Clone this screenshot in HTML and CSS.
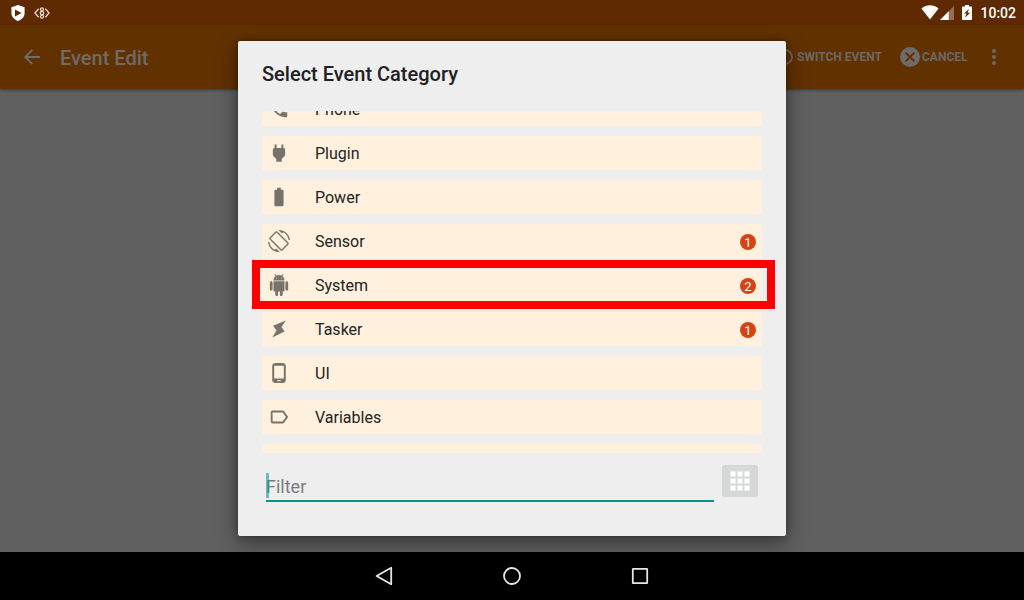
FILE: index.html
```html
<!DOCTYPE html>
<html lang="en">
<head>
<meta charset="utf-8">
<title>Event Edit</title>
<link rel="stylesheet" href="styles.css">
</head>
<body>
<div class="screen">
  <header class="status">
    <svg class="shield" width="14" height="16" viewBox="0 0 14 16"><path fill="#fff" fill-rule="evenodd" d="M7 0 13.6 2.3V8c0 4-3 6.600-6.600 8C3.400 14.600.4 12 .4 8V2.300zM4 4.500v7L10.600 8z"/></svg>
    <svg class="code" width="16" height="12" viewBox="0 0 16 12" fill="none" stroke="#ead9cc" stroke-width="1.300"><path d="M4.700 1.700.9 6l3.800 4.300M11.300 1.700 15.100 6l-3.800 4.300"/><circle cx="8" cy="2.300" r="1.500"/><circle cx="8" cy="6" r="1.700"/><circle cx="8" cy="9.700" r="1.500"/></svg>
    <span class="fill"></span>
    <svg class="wifi" width="18" height="15" viewBox="0 0 18 15"><path fill="#fff" d="M9 14.500.4 3.500C3 1.200 6 .3 9 .3s6 .9 8.600 3.200z"/></svg>
    <svg class="signal" width="14" height="14" viewBox="0 0 14 14"><path fill="#946e57" d="M14 0v14H0z"/><path fill="#fff" d="M8.700 5.300V14H0z"/></svg>
    <svg class="charge" width="10" height="15" viewBox="0 0 10 15"><path fill="#fff" d="M3 0h4v1.500h2.300q.7 0 .7.700v12.100q0 .7-.7.700H.7Q0 15 0 14.300V2.200q0-.7.700-.7H3z"/><path fill="#5f2a02" d="M7 4 2 8.600h2.500L3 12.800l5.200-5.100H5.600z"/></svg>
    <span class="clock">10:02</span>
  </header>
  <div class="appbar">
    <svg class="back" width="16" height="16" viewBox="0 0 16 16" fill="none" stroke="#6e6b68" stroke-width="1.900"><path d="M16 8H1.500M8.300.8 1.300 8l7 7.200"/></svg>
    <h1 class="page-title">Event Edit</h1>
    <span class="fill"></span>
    <svg class="switch" width="16" height="16" viewBox="0 0 16 16"><circle cx="8" cy="8" r="7" fill="none" stroke="#6b6866" stroke-width="1.800"/></svg>
    <span class="action action-switch">SWITCH EVENT</span>
    <svg class="cancel" width="20" height="20" viewBox="0 0 20 20"><circle cx="10" cy="10" r="10" fill="#6e6b69"/><path d="m5.600 5.600 8.800 8.800m0-8.800-8.800 8.800" stroke="#613100" stroke-width="2"/></svg>
    <span class="action action-cancel">CANCEL</span>
    <svg class="more" width="4" height="16" viewBox="0 0 4 16" fill="#6b6866"><circle cx="2" cy="2" r="2"/><circle cx="2" cy="8" r="2"/><circle cx="2" cy="14" r="2"/></svg>
  </div>
  <main class="content"></main>
  <nav class="navbar">
    <svg width="20" height="20" viewBox="0 0 20 20"><path d="M17.200 1.800v16.400L2.600 10z"/></svg>
    <svg width="20" height="20" viewBox="0 0 20 20"><circle cx="10" cy="10" r="8"/></svg>
    <svg width="20" height="20" viewBox="0 0 20 20"><rect x="2.800" y="2.800" width="14.400" height="14.400" rx=".5"/></svg>
  </nav>

  <section class="dialog">
    <h2 class="dialog-title">Select Event Category</h2>
    <div class="list">
      <div class="row"><svg class="icon" viewBox="0 0 24 24"><path d="M6.620 10.790c1.440 2.830 3.760 5.140 6.590 6.590l2.200-2.200c.27-.27.670-.36 1.020-.24 1.120.37 2.330.57 3.570.57.550 0 1 .45 1 1V20c0 .550-.45 1-1 1-9.390 0-17-7.610-17-17 0-.550.45-1 1-1h3.500c.550 0 1 .45 1 1 0 1.250.2 2.450.57 3.570.11.350.03.740-.25 1.020z"/></svg><span class="label">Phone</span></div>
      <div class="row"><svg class="icon" viewBox="0 0 24 24"><path d="M16.800 6.500V2.800h-2.200v3.700H9.400V2.800H7.200v3.700C6 6.500 5.300 7.400 5.300 8.500v6.300L9 18.600v2.900h6v-2.900l3.700-3.800V8.500c0-1.100-.8-2-1.900-2z"/></svg><span class="label">Plugin</span></div>
      <div class="row"><svg class="icon" viewBox="0 0 24 24"><path d="M15.700 4H14V2h-4v2H8.300C7.600 4 7 4.600 7 5.300v15.300c0 .8.600 1.400 1.300 1.400h7.300c.8 0 1.400-.6 1.400-1.300V5.300c0-.7-.6-1.300-1.300-1.300z"/></svg><span class="label">Power</span></div>
      <div class="row"><svg class="icon" viewBox="0 0 24 24"><path d="M16.480 2.520c3.270 1.550 5.610 4.720 5.970 8.480h1.500C23.440 4.840 18.290 0 12 0l-.66.030 3.810 3.810 1.330-1.320zm-6.250-.77c-.59-.59-1.540-.59-2.120 0L1.750 8.110c-.59.590-.59 1.540 0 2.120l12.020 12.020c.59.590 1.540.590 2.120 0l6.360-6.360c.59-.59.590-1.540 0-2.120L10.230 1.750zm4.600 19.440L2.810 9.170l6.360-6.360 12.020 12.020-6.360 6.360zm-7.310.29C4.250 19.940 1.910 16.760 1.550 13H.05C.56 19.160 5.710 24 12 24l.66-.03-3.810-3.810-1.330 1.320z"/></svg><span class="label">Sensor</span><span class="badge">1</span></div>
      <div class="row"><svg class="icon android" viewBox="0 0 24 24"><path d="M6 18c0 .550.45 1 1 1h1v3.500c0 .830.670 1.500 1.500 1.500s1.500-.67 1.500-1.500V19h2v3.500c0 .830.670 1.500 1.500 1.500s1.500-.67 1.500-1.500V19h1c.550 0 1-.45 1-1V8H6v10zM3.500 8C2.670 8 2 8.670 2 9.500v7c0 .830.670 1.500 1.500 1.500S5 17.330 5 16.500v-7C5 8.670 4.330 8 3.500 8zm17 0c-.83 0-1.500.67-1.500 1.500v7c0 .830.670 1.500 1.500 1.500s1.500-.67 1.500-1.500v-7c0-.83-.67-1.500-1.500-1.500zm-4.970-5.840 1.300-1.300c.2-.2.200-.51 0-.71-.2-.2-.51-.2-.71 0l-1.480 1.480C13.850 1.230 12.950 1 12 1c-.96 0-1.860.23-2.660.63L7.850.15c-.2-.2-.51-.2-.71 0-.2.200-.2.510 0 .71l1.310 1.310C6.970 3.260 6 5.010 6 7h12c0-1.990-.97-3.750-2.470-4.840zM10 5H9V4h1v1zm5 0h-1V4h1v1z"/></svg><span class="label">System</span><span class="badge">2</span></div>
      <div class="row"><svg class="icon" viewBox="0 0 24 24"><path d="M19.500 2.600 5.600 8.400 9.300 13.600 4.600 21.200 18.200 14.800 14.600 9.800z"/></svg><span class="label">Tasker</span><span class="badge">1</span></div>
      <div class="row"><svg class="icon" viewBox="0 0 24 24"><path d="M16 1H8C6.340 1 4.600 2.340 4.600 4v16c0 1.660 1.740 3 3.400 3h8c1.660 0 3.400-1.340 3.400-3V4c0-1.660-1.740-3-3.400-3zm-2 20h-4v-1h4v1zm3.250-3H6.750V4h10.500v14z"/></svg><span class="label">UI</span></div>
      <div class="row"><svg class="icon" viewBox="0 0 24 24"><path d="M17.630 5.840C17.270 5.330 16.670 5 16 5L5 5.010C3.900 5.010 3 5.900 3 7v10c0 1.100.9 1.990 2 1.990L16 19c.67 0 1.270-.33 1.630-.84L22 12l-4.370-6.160zM16 17H5V7h11l3.550 5L16 17z"/></svg><span class="label">Variables</span></div>
      <div class="row"></div>
    </div>
    <div class="footer">
      <div class="filter"><span class="caret"></span>Filter</div>
      <div class="grid-button"><svg width="20" height="20" viewBox="0 0 20 20"><path fill="#e9eaea" d="M0 0h20v20H0z"/><path fill="#fff" d="M1 1h4v4H1zM8 1h4v4H8zM15 1h4v4h-4zM1 8h4v4H1zM8 8h4v4H8zM15 8h4v4h-4zM1 15h4v4H1zM8 15h4v4H8zM15 15h4v4h-4z"/><path stroke="#d6d7d7" stroke-width="1" d="M6.500 0v20M13.500 0v20M0 6.500h20M0 13.500h20"/></svg></div>
    </div>
  </section>
  <div class="highlight"></div>
</div>
</body>
</html>
```
FILE: styles.css
```css
* { box-sizing: border-box; }
body { margin: 0; font-family: Roboto, "Noto Sans", sans-serif; }
svg { display: block; flex: none; }
h1, h2 { margin: 0; font-weight: 500; }

.screen {
  position: relative;
  width: 1024px;
  height: 600px;
  display: flex;
  flex-direction: column;
  overflow: hidden;
  background: #606060;
}
.fill { flex: 1; }

.status {
  height: 25px;
  display: flex;
  align-items: center;
  padding: 0 8px 0 11px;
  background: #5f2a02;
}
.code { margin-left: 9px; }
.wifi { margin-top: -1px; }
.signal { margin: 1px 8px 0 1px; }
.charge { margin: -1px 8px 0 0; }
.clock { color: #fff; font-size: 14px; font-weight: 500; line-height: 25px; padding-top: 1px; }

.appbar {
  height: 64px;
  display: flex;
  align-items: center;
  padding: 0 28px 0 24px;
  background: #613100;
  box-shadow: 0 1px 3px rgba(0, 0, 0, .45);
}
.page-title { margin-left: 20px; padding-top: 1px; font-size: 20px; line-height: 24px; color: #6e6b68; }
.action { font-size: 12px; font-weight: 700; line-height: 16px; color: #6b6866; white-space: nowrap; }
.action-switch { margin-left: 4px; width: 86px; }
.cancel { margin-left: 17px; }
.action-cancel { margin-left: 2px; width: 46px; }
.more { margin-left: 24px; }

.content { flex: 1; }

.navbar {
  height: 48px;
  display: flex;
  justify-content: center;
  align-items: center;
  gap: 108px;
  background: #000;
}
.navbar svg { fill: none; stroke: #e6e6e6; stroke-width: 1.8; stroke-linejoin: round; }

.dialog {
  position: absolute;
  left: 238px;
  top: 41px;
  width: 548px;
  height: 495px;
  padding: 0 24px;
  display: flex;
  flex-direction: column;
  background: #eee;
  border-radius: 2px;
  box-shadow: 0 8px 22px rgba(0, 0, 0, .4), 0 0 6px rgba(0, 0, 0, .3);
}
.dialog-title { height: 70px; padding-top: 21px; font-size: 20px; line-height: 24px; color: #212121; }

.list {
  height: 342px;
  overflow: hidden;
  display: flex;
  flex-direction: column;
  gap: 10px;
}
.row {
  height: 34px;
  flex: none;
  display: flex;
  align-items: center;
  padding: 0 6px;
  background: #fff1de;
}
.row:first-child { margin-top: -19px; }
.icon { width: 22px; height: 22px; fill: #78736a; }
.label { flex: 1; margin-left: 25px; font-size: 16px; line-height: 20px; color: #222; padding-top: 1px; }
.badge {
  width: 16px;
  height: 16px;
  margin-top: 2px;
  border-radius: 50%;
  background: #d84315;
  color: #fff;
  font-size: 13px;
  line-height: 17px;
  text-align: center;
}

.footer { display: flex; padding: 12px 4px 0; gap: 8px; }
.filter {
  position: relative;
  width: 448px;
  height: 37px;
  padding-top: 10px;
  border-bottom: 2px solid #009688;
  font-size: 18px;
  line-height: 24px;
  color: #7b7b7b;
}
.caret { position: absolute; left: 0; top: 8px; width: 3px; height: 25px; background: rgba(0, 150, 136, .55); }
.grid-button {
  width: 36px;
  height: 32px;
  display: flex;
  align-items: center;
  justify-content: center;
  border-radius: 2px;
  background: #d6d7d7;
}

.highlight {
  position: absolute;
  left: 252px;
  top: 260px;
  width: 523px;
  height: 49px;
  border: 8px solid #f00;
}
```
